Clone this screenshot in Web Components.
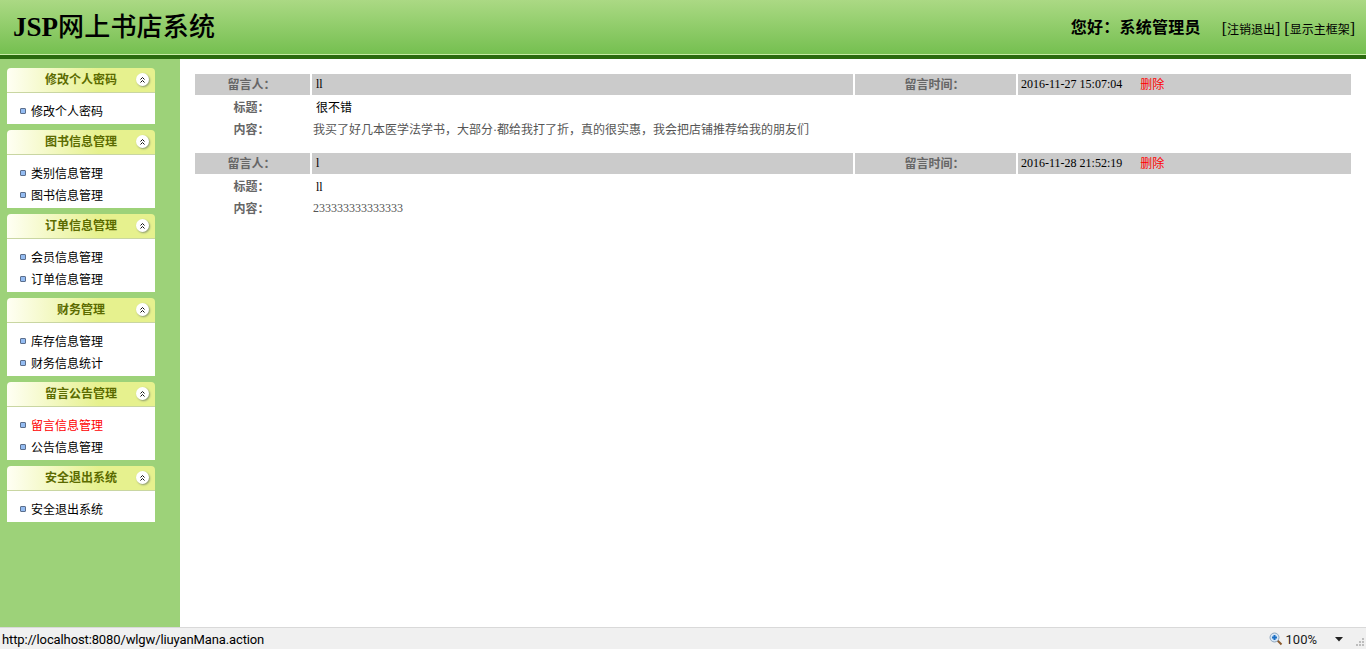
<!DOCTYPE html>
<html lang="zh">
<head>
<meta charset="utf-8">
<title>JSP网上书店系统</title>
<style>
  html, body { margin: 0; height: 100%; overflow: hidden; }
  body {
    display: flex;
    flex-direction: column;
    font: 12px "Liberation Serif", "Noto Sans CJK SC", serif;
  }
</style>
</head>
<body>
<app-header></app-header>
<page-main>
  <side-bar slot="side">
    <side-panel title="修改个人密码"><side-link>修改个人密码</side-link></side-panel>
    <side-panel title="图书信息管理"><side-link>类别信息管理</side-link><side-link>图书信息管理</side-link></side-panel>
    <side-panel title="订单信息管理"><side-link>会员信息管理</side-link><side-link>订单信息管理</side-link></side-panel>
    <side-panel title="财务管理"><side-link>库存信息管理</side-link><side-link>财务信息统计</side-link></side-panel>
    <side-panel title="留言公告管理"><side-link active>留言信息管理</side-link><side-link>公告信息管理</side-link></side-panel>
    <side-panel title="安全退出系统"><side-link>安全退出系统</side-link></side-panel>
  </side-bar>
  <msg-card user="ll" time="2016-11-27 15:07:04" subject="很不错" body="我买了好几本医学法学书，大部分·都给我打了折，真的很实惠，我会把店铺推荐给我的朋友们"></msg-card>
  <msg-card user="l" time="2016-11-28 21:52:19" subject="ll" body="233333333333333" latin></msg-card>
</page-main>
<status-bar></status-bar>

<script>
  // cabecera verde con el nombre y los enlaces
  class AppHeader extends HTMLElement {
    constructor() {
      super();
      this.attachShadow({ mode: 'open' }).innerHTML = `
        <style>
          :host {
            display: flex;
            flex: none;
            align-items: center;
            justify-content: space-between;
            box-sizing: border-box;
            height: 59px;
            padding: 0 11px 1px 13px;
            background: linear-gradient(#abd984, #74bf4f);
            border-bottom: 4px solid #2a6a0e;
            box-shadow: inset 0 -1px 0 #c9eca6;
            color: #000;
          }
          h1 { margin: 0; font-size: 27px; font-weight: bold; line-height: 30px; }
          h1 span { font-size: 26px; font-weight: 500; letter-spacing: .2px; }
          .right { display: flex; align-items: center; }
          .hello { font-size: 16px; font-weight: bold; letter-spacing: .25px; margin: 0 21px 3px 0; }
          .links { font-size: 12px; margin-top: 4px; }
          .links b { font-weight: normal; font-size: 16px; line-height: 16px; }
          a { color: #000; text-decoration: none; }
          a + a { margin-left: 4px; }
        </style>
        <h1>JSP<span>网上书店系统</span></h1>
        <div class="right">
          <div class="hello">您好：系统管理员</div>
          <div class="links"><a href="#"><b>[</b>注销退出<b>]</b></a><a href="#"><b>[</b>显示主框架<b>]</b></a></div>
        </div>`;
    }
  }
  customElements.define('app-header', AppHeader);

  class PageMain extends HTMLElement {
    constructor() {
      super();
      this.attachShadow({ mode: 'open' }).innerHTML = `
        <style>
          :host { display: flex; flex: 1; min-height: 0; background: #fff; }
          .content { flex: 1; padding: 15px 15px 0; }
        </style>
        <slot name="side"></slot>
        <div class="content"><slot></slot></div>`;
    }
  }
  customElements.define('page-main', PageMain);

  class SideBar extends HTMLElement {
    constructor() {
      super();
      this.attachShadow({ mode: 'open' }).innerHTML = `
        <style>
          :host {
            display: flex;
            flex-direction: column;
            gap: 6px;
            box-sizing: border-box;
            width: 180px;
            padding: 9px 25px 0 7px;
            background: #9dd279;
          }
        </style>
        <slot></slot>`;
    }
  }
  customElements.define('side-bar', SideBar);

  class SidePanel extends HTMLElement {
    constructor() {
      super();
      this.attachShadow({ mode: 'open' }).innerHTML = `
        <style>
          :host { display: block; }
          .head {
            position: relative;
            box-sizing: border-box;
            height: 25px;
            line-height: 25px;
            text-align: center;
            font-weight: bold;
            color: #5b6b00;
            background: linear-gradient(90deg, #fffff4, #e6f18e 62%);
            border-bottom: 1px solid #c9d6a2;
            border-radius: 4px 4px 0 0;
          }
          .toggle {
            position: absolute;
            top: 5px;
            right: 6px;
            width: 13px;
            height: 13px;
            border-radius: 50%;
            background: #fff;
            box-shadow: 1px 1px 2px #8c9a70;
          }
          svg { display: block; }
          .body { display: flex; flex-direction: column; padding: 7px 0 2px; background: #fff; }
        </style>
        <div class="head">
          <span class="title"></span>
          <span class="toggle"><svg width="13" height="13" viewBox="0 0 13 13" fill="none" stroke="#111"><path d="M4.500 6.500l2-2 2 2M4.500 9.500l2-2 2 2"/></svg></span>
        </div>
        <div class="body"><slot></slot></div>`;
    }
    connectedCallback() {
      this.shadowRoot.querySelector('.title').textContent = this.getAttribute('title');
    }
  }
  customElements.define('side-panel', SidePanel);

  class SideLink extends HTMLElement {
    constructor() {
      super();
      this.attachShadow({ mode: 'open' }).innerHTML = `
        <style>
          :host { display: flex; align-items: center; height: 22px; padding-left: 13px; color: #000; }
          :host([active]) { color: #f00; }
          i {
            box-sizing: border-box;
            width: 6px;
            height: 6px;
            margin-right: 5px;
            background: #94bcf2;
            border: 1px solid #5c6f8c;
            border-radius: 1px;
          }
        </style>
        <i></i><slot></slot>`;
    }
  }
  customElements.define('side-link', SideLink);

  // bloque de un mensaje: fila gris y dos filas de texto
  class MsgCard extends HTMLElement {
    constructor() {
      super();
      this.attachShadow({ mode: 'open' });
    }
    connectedCallback() {
      const user = this.getAttribute('user');
      const time = this.getAttribute('time');
      const subject = this.getAttribute('subject');
      const body = this.getAttribute('body');
      this.shadowRoot.innerHTML = `
        <style>
          :host {
            display: grid;
            grid-template-columns: 115px 541px 161px 333px;
            column-gap: 2px;
            grid-auto-rows: 22px;
            margin-bottom: 13px;
            line-height: 24px;
          }
          .bar { height: 21px; line-height: 21px; background: #cbcbcb; }
          .bar.lbl { line-height: 23px; }
          .bar.user { padding-left: 4px; }
          .bar.time { padding-left: 3px; }
          .lbl { text-align: center; font-weight: bold; color: #666; padding-right: 2px; }
          .row { grid-column: 2 / 5; padding-left: 1px; color: #555; }
          :host([latin]) .row.txt { line-height: 22px; }
          .subj { padding-left: 4px; color: #000; }
          .time a { color: #f00; text-decoration: none; margin-left: 15px; line-height: 23px; vertical-align: -1px; }
        </style>
        <div class="bar lbl">留言人：</div>
        <div class="bar user">${user}</div>
        <div class="bar lbl">留言时间：</div>
        <div class="bar time">${time} <a href="#">删除</a></div>
        <div class="lbl">标题：</div>
        <div class="row subj">${subject}</div>
        <div class="lbl">内容：</div>
        <div class="row txt">${body}</div>`;
    }
  }
  customElements.define('msg-card', MsgCard);

  class StatusBar extends HTMLElement {
    constructor() {
      super();
      this.attachShadow({ mode: 'open' }).innerHTML = `
        <style>
          :host {
            display: flex;
            flex: none;
            align-items: center;
            justify-content: space-between;
            box-sizing: border-box;
            height: 22px;
            padding: 1px 0 0 2px;
            background: #f0f0f0;
            border-top: 1px solid #d9d9d9;
            font: 13px Roboto, "Noto Sans", sans-serif;
            color: #000;
          }
          .url { letter-spacing: -.12px; }
          .right { display: flex; align-items: center; }
          .zoom { margin: 0 18px 0 3px; color: #1a1a1a; }
          svg { display: block; }
        </style>
        <span class="url">http://localhost:8080/wlgw/liuyanMana.action</span>
        <div class="right">
          <svg width="14" height="14" viewBox="0 0 14 14">
            <path d="M8.500 8.500l4 4" stroke="#8a5a2c" stroke-width="2"/>
            <circle cx="5.500" cy="5.500" r="4.500" fill="#d6e6f6" stroke="#8fa6bd"/>
            <path d="M3 5.500h5M5.500 3v5" stroke="#1b6fc4" stroke-width="2"/>
          </svg>
          <span class="zoom">100%</span>
          <svg width="8" height="5" viewBox="0 0 8 5"><path d="M0 0h8L4 4.500z" fill="#222"/></svg>
          <svg style="margin:6px 1px 0 12px" width="10" height="10" viewBox="0 0 10 10" fill="#bdbdbd"><path d="M7 1h2v2H7zM4 4h2v2H4zM7 4h2v2H7zM1 7h2v2H1zM4 7h2v2H4zM7 7h2v2H7z"/></svg>
        </div>`;
    }
  }
  customElements.define('status-bar', StatusBar);
</script>
</body>
</html>
